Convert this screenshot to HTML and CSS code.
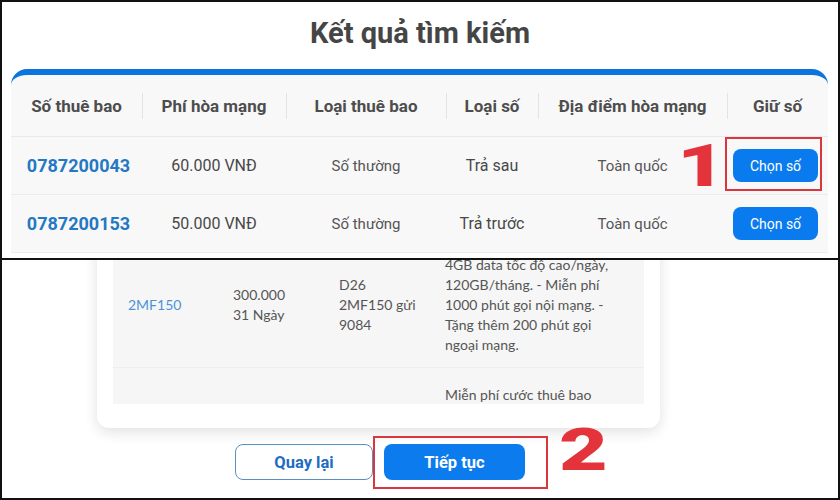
FILE: index.html
```html
<!DOCTYPE html>
<html lang="vi">
<head>
<meta charset="utf-8">
<title>Kết quả tìm kiếm</title>
<link rel="stylesheet" href="styles.css">
</head>
<body>
<div class="frame">
  <section class="top">
    <h1 class="title">Kết quả tìm kiếm</h1>
    <div class="card">
      <div class="grid head">
        <div class="th">Số thuê bao</div>
        <div class="th">Phí hòa mạng</div>
        <div class="th">Loại thuê bao</div>
        <div class="th">Loại số</div>
        <div class="th">Địa điểm hòa mạng</div>
        <div class="th">Giữ số</div>
      </div>
      <div class="grid row">
        <div class="num">0787200043</div>
        <div class="fee">60.000 VNĐ</div>
        <div class="sm">Số thường</div>
        <div class="type">Trả sau</div>
        <div class="sm">Toàn quốc</div>
        <div class="cell-btn"><button class="pick">Chọn số</button></div>
      </div>
      <div class="grid row">
        <div class="num">0787200153</div>
        <div class="fee">50.000 VNĐ</div>
        <div class="sm">Số thường</div>
        <div class="type">Trả trước</div>
        <div class="sm">Toàn quốc</div>
        <div class="cell-btn"><button class="pick">Chọn số</button></div>
      </div>
    </div>
    <div class="mark mark1"></div>
    <span class="step step1">1</span>
  </section>
  <section class="bottom">
    <div class="wrap">
      <div class="card2">
        <div class="tbl">
          <div class="trow r1">
            <div class="code">2MF150</div>
            <div>300.000<br>31 Ngày</div>
            <div>D26<br>2MF150 gửi<br>9084</div>
            <div class="desc">4GB data tốc độ cao/ngày, 120GB/tháng. - Miễn phí 1000 phút gọi nội mạng. - Tặng thêm 200 phút gọi ngoại mạng.</div>
          </div>
          <div class="trow r2">
            <div></div>
            <div></div>
            <div></div>
            <div class="desc">Miễn phí cước thuê bao</div>
          </div>
        </div>
      </div>
      <div class="actions">
        <button class="btn back">Quay lại</button>
        <button class="btn next">Tiếp tục</button>
      </div>
    </div>
    <div class="mark mark2"></div>
    <span class="step step2">2</span>
  </section>
</div>
</body>
</html>
```

FILE: styles.css
```css
* { box-sizing: border-box; }

body {
  margin: 0;
  background: #fff;
  font-family: Roboto, "Noto Sans", sans-serif;
}

.frame {
  width: 840px;
  height: 500px;
  border: 2px solid #111;
  display: flex;
  flex-direction: column;
}

/* ---------- top panel ---------- */
.top {
  height: 256px;
  position: relative;
  overflow: hidden;
  background: #fff;
}

.title {
  margin: 0;
  padding-top: 13px;
  text-align: center;
  font-size: 29px;
  line-height: 36px;
  font-weight: 700;
  color: #454545;
}

.card {
  margin: 18px 10px 0 9px;
  border-top: 6px solid #0b74de;
  border-radius: 16px 16px 0 0;
  background: #f8f8f8;
}

.grid {
  display: grid;
  grid-template-columns: 131px 144px 160px 92px 189px 101px;
}

.head {
  height: 62px;
  border-bottom: 1px solid #e9e9e9;
}

.th {
  position: relative;
  display: flex;
  align-items: center;
  justify-content: center;
  font-weight: 700;
  font-size: 17px;
  color: #4d4d4d;
}

.th + .th::before {
  content: "";
  position: absolute;
  left: 0;
  top: 50%;
  height: 26px;
  margin-top: -13px;
  width: 1px;
  background: #e3e3e3;
}

.row {
  height: 58px;
  border-bottom: 1px solid #ececec;
  align-items: center;
  text-align: center;
}

.num {
  color: #2478c4;
  font-weight: 700;
  font-size: 18px;
  padding-left: 4px;
}

.fee {
  font-size: 16px;
  color: #484848;
}

.sm {
  font-size: 15px;
  color: #555;
}

.type {
  font-size: 16px;
  color: #484848;
}

.cell-btn {
  display: flex;
  justify-content: center;
  padding-right: 4px;
}

.pick {
  width: 85px;
  height: 33px;
  border: 0;
  border-radius: 8px;
  background: #0a7bee;
  color: #fff;
  font-family: Roboto, sans-serif;
  font-size: 14px;
}

/* ---------- annotations ---------- */
.mark {
  position: absolute;
  border: 2px solid #d9363e;
}

.mark1 {
  left: 723px;
  top: 135px;
  width: 97px;
  height: 54px;
}

.mark2 {
  left: 371px;
  top: 176px;
  width: 175px;
  height: 53px;
}

.step {
  position: absolute;
  font-family: Roboto, sans-serif;
  font-weight: 900;
  font-size: 60px;
  line-height: 60px;
  color: #e3343b;
  transform-origin: left top;
}

.step1 {
  left: 675px;
  top: 134px;
  transform: scaleX(1.4);
}

.step2 {
  left: 557px;
  top: 160px;
  transform: scaleX(1.4);
}

/* ---------- bottom panel ---------- */
.bottom {
  flex: 1;
  border-top: 2px solid #111;
  position: relative;
  overflow: hidden;
  background: #fff;
}

.wrap {
  width: 563px;
  margin-left: 95px;
}

.card2 {
  margin-top: -18px;
  background: #fff;
  border-radius: 0 0 12px 12px;
  box-shadow: 0 4px 14px rgba(0, 0, 0, 0.12);
  padding: 0 16px 24px;
}

.tbl {
  height: 162px;
  overflow: hidden;
  background: #f6f6f6;
  font-family: Lato, "Noto Sans", sans-serif;
  font-size: 14px;
  line-height: 20px;
  color: #555;
}

.trow {
  display: grid;
  grid-template-columns: 105px 106px 106px 217px;
}

.trow > div {
  padding-left: 15px;
}

.r1 {
  height: 126px;
  align-items: center;
  border-bottom: 1px solid #eeeeee;
}

.r2 {
  padding-top: 17px;
}

.code {
  color: #4a94d6;
}

.trow > .desc {
  padding-right: 27px;
}

.actions {
  display: flex;
  justify-content: center;
  gap: 11px;
  margin-top: 16px;
  padding-left: 3px;
}

.btn {
  height: 36px;
  border-radius: 8px;
  font-family: Roboto, sans-serif;
  font-weight: 700;
  font-size: 16.5px;
}

.back {
  width: 138px;
  border: 1px solid #5b8fc4;
  background: #fff;
  color: #1f6cc0;
}

.next {
  width: 141px;
  border: 0;
  background: #0b7bee;
  color: #fff;
}
```
